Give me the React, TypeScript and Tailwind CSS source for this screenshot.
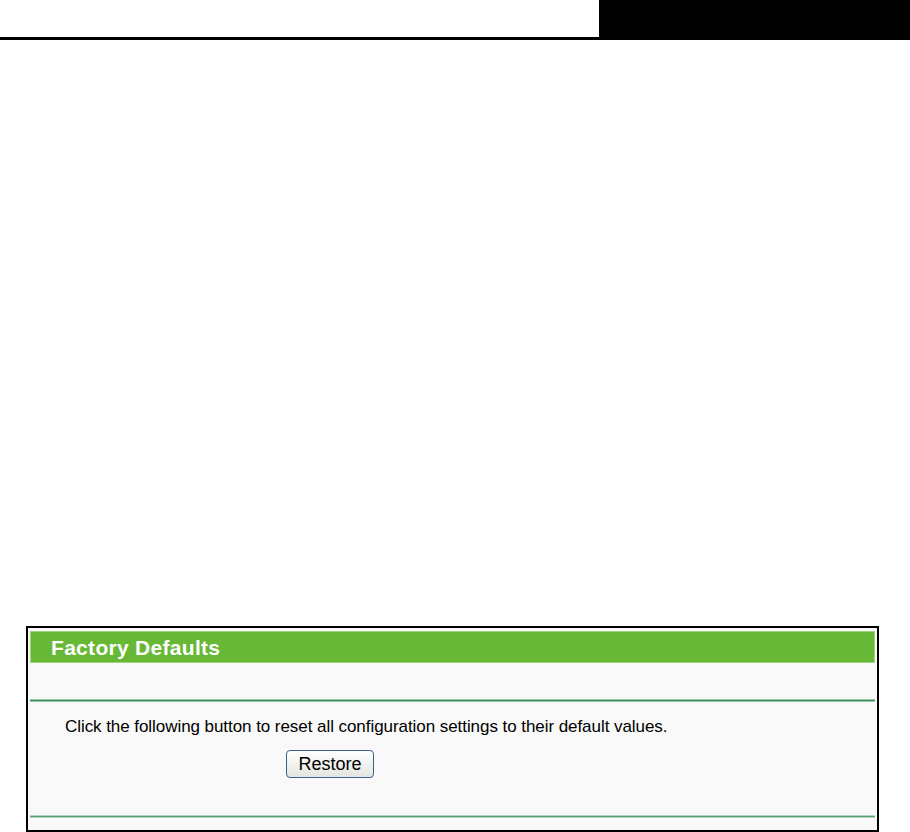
export default function App() {
  return (
    <div className="w-[910px] h-[832px] bg-white font-['Liberation_Sans',Arial,sans-serif] overflow-hidden">
      {/* page header strip */}
      <div className="flex h-[40px] border-b-[3px] border-black">
        <div className="flex-1" />
        <div className="w-[311px] bg-black" />
      </div>

      <div className="h-[586px]" />

      {/* Factory Defaults panel */}
      <div className="ml-[26px] w-[853px] h-[206px] border-2 border-black bg-[#f9f9f9] px-[2px] pt-[3px] flex flex-col">
        <div className="h-[32px] bg-[#67b834] border border-[#9fd37d] flex items-center pl-[20px]">
          <span className="text-white text-[21px] font-bold leading-none tracking-[0.3px]">Factory Defaults</span>
        </div>
        <div className="h-[36px]" />
        <div className="h-[3px] bg-[#3b8a5b] border-y border-[#9cc8aa]" />
        <div className="pl-[35px] pt-[15px] text-[17px] leading-[20px] tracking-[-0.06px] text-black">
          Click the following button to reset all configuration settings to their default values.
        </div>
        <div className="pl-[256px] pt-[13px]">
          <button className="w-[88px] h-[28px] rounded-[4px] border border-[#3c6289] bg-gradient-to-b from-white to-[#e4e4e0] text-[18px] text-black leading-none">
            Restore
          </button>
        </div>
        <div className="mt-auto mb-[12px] h-[3px] bg-[#5a9f71] border-y border-[#b3d8bf]" />
      </div>
    </div>
  );
}
